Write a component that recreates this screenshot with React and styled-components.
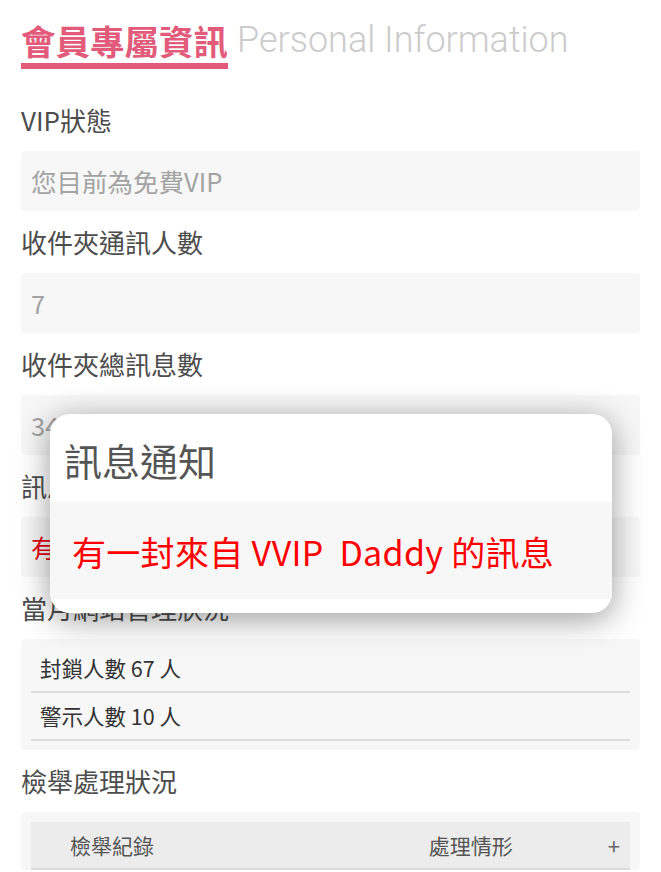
import React from "react";
import styled, { createGlobalStyle } from "styled-components";

const GlobalStyle = createGlobalStyle`
  html, body {
    margin: 0;
    padding: 0;
    background: #fff;
  }
  body {
    font-family: "Noto Sans CJK TC", "Noto Sans", sans-serif;
    overflow: hidden;
  }
`;

const Page = styled.div`
  position: relative;
  height: 872px;
  padding: 20px 21px 0;
  box-sizing: border-box;
  overflow: hidden;
`;

const Heading = styled.div`
  display: flex;
  align-items: flex-start;
  gap: 9px;
  margin-bottom: 20px;
`;

const TitleCn = styled.h1`
  margin: 0;
  font-size: 34.5px;
  line-height: 40px;
  font-weight: 700;
  color: #e25b7a;
  padding-bottom: 3px;
  border-bottom: 6px solid #e35a78;
`;

const TitleEn = styled.span`
  font-family: Roboto, "Liberation Sans", sans-serif;
  font-weight: 300;
  font-size: 36px;
  line-height: 40px;
  color: #cbcbcb;
`;

const Label = styled.div`
  height: 62px;
  line-height: 62px;
  font-size: 26px;
  color: #4d4d4d;
`;

const Field = styled.div`
  height: 60px;
  line-height: 60px;
  padding-left: 10px;
  background: #f7f7f7;
  border-radius: 4px;
  font-size: 25.5px;
  color: ${(p) => (p.$alert ? "#e60012" : "#a3a3a3")};
  white-space: pre;
  overflow: hidden;
`;

const Panel = styled.div`
  background: #f7f7f7;
  border-radius: 4px;
  padding: ${(p) => (p.$table ? "10px 10px 0" : "6px 10px 9px")};
`;

const Row = styled.div`
  height: 46px;
  line-height: 46px;
  padding-left: 9px;
  font-size: 21.5px;
  color: #333;
  border-bottom: 2px solid #dcdcdc;
`;

const TableHead = styled.div`
  display: flex;
  align-items: center;
  height: 46px;
  padding: 0 10px 0 39px;
  background: #ececec;
  border-bottom: 2px solid #dadada;
  font-size: 21px;
  color: #555;
`;

const HeadCell = styled.span`
  flex: ${(p) => (p.$grow ? 1 : "none")};
`;

const Plus = styled.span`
  margin-left: 95px;
  font-size: 22px;
  color: #666;
`;

const Modal = styled.div`
  position: absolute;
  left: 50px;
  top: 414px;
  width: 562px;
  padding-bottom: 14px;
  background: #fff;
  border-radius: 20px;
  box-shadow: 0 6px 32px rgba(0, 0, 0, 0.4);
  overflow: hidden;
`;

const ModalTitle = styled.div`
  height: 88px;
  line-height: 92px;
  padding-left: 14px;
  font-size: 38px;
  color: #555;
`;

const ModalBody = styled.div`
  height: 97px;
  line-height: 100px;
  padding-left: 22px;
  background: #f7f7f7;
  font-size: 34px;
  letter-spacing: 0.3px;
  color: #ff0000;
  white-space: pre;
`;

const fields = [
  { label: "VIP狀態", value: "您目前為免費VIP" },
  { label: "收件夾通訊人數", value: "7" },
  { label: "收件夾總訊息數", value: "34" },
  { label: "訊息通知", value: "有一封來自 VVIP  Daddy 的訊息", alert: true },
];

export default function App() {
  return (
    <>
      <GlobalStyle />
      <Page>
        <Heading>
          <TitleCn>會員專屬資訊</TitleCn>
          <TitleEn>Personal Information</TitleEn>
        </Heading>

        {fields.map((f) => (
          <React.Fragment key={f.label}>
            <Label>{f.label}</Label>
            <Field $alert={f.alert}>{f.value}</Field>
          </React.Fragment>
        ))}

        <Label>當月網站管理狀況</Label>
        <Panel>
          <Row>封鎖人數 67 人</Row>
          <Row>警示人數 10 人</Row>
        </Panel>

        <Label>檢舉處理狀況</Label>
        <Panel $table>
          <TableHead>
            <HeadCell $grow>檢舉紀錄</HeadCell>
            <HeadCell>處理情形</HeadCell>
            <Plus>+</Plus>
          </TableHead>
        </Panel>

        <Modal>
          <ModalTitle>訊息通知</ModalTitle>
          <ModalBody>有一封來自 VVIP  Daddy 的訊息</ModalBody>
        </Modal>
      </Page>
    </>
  );
}
